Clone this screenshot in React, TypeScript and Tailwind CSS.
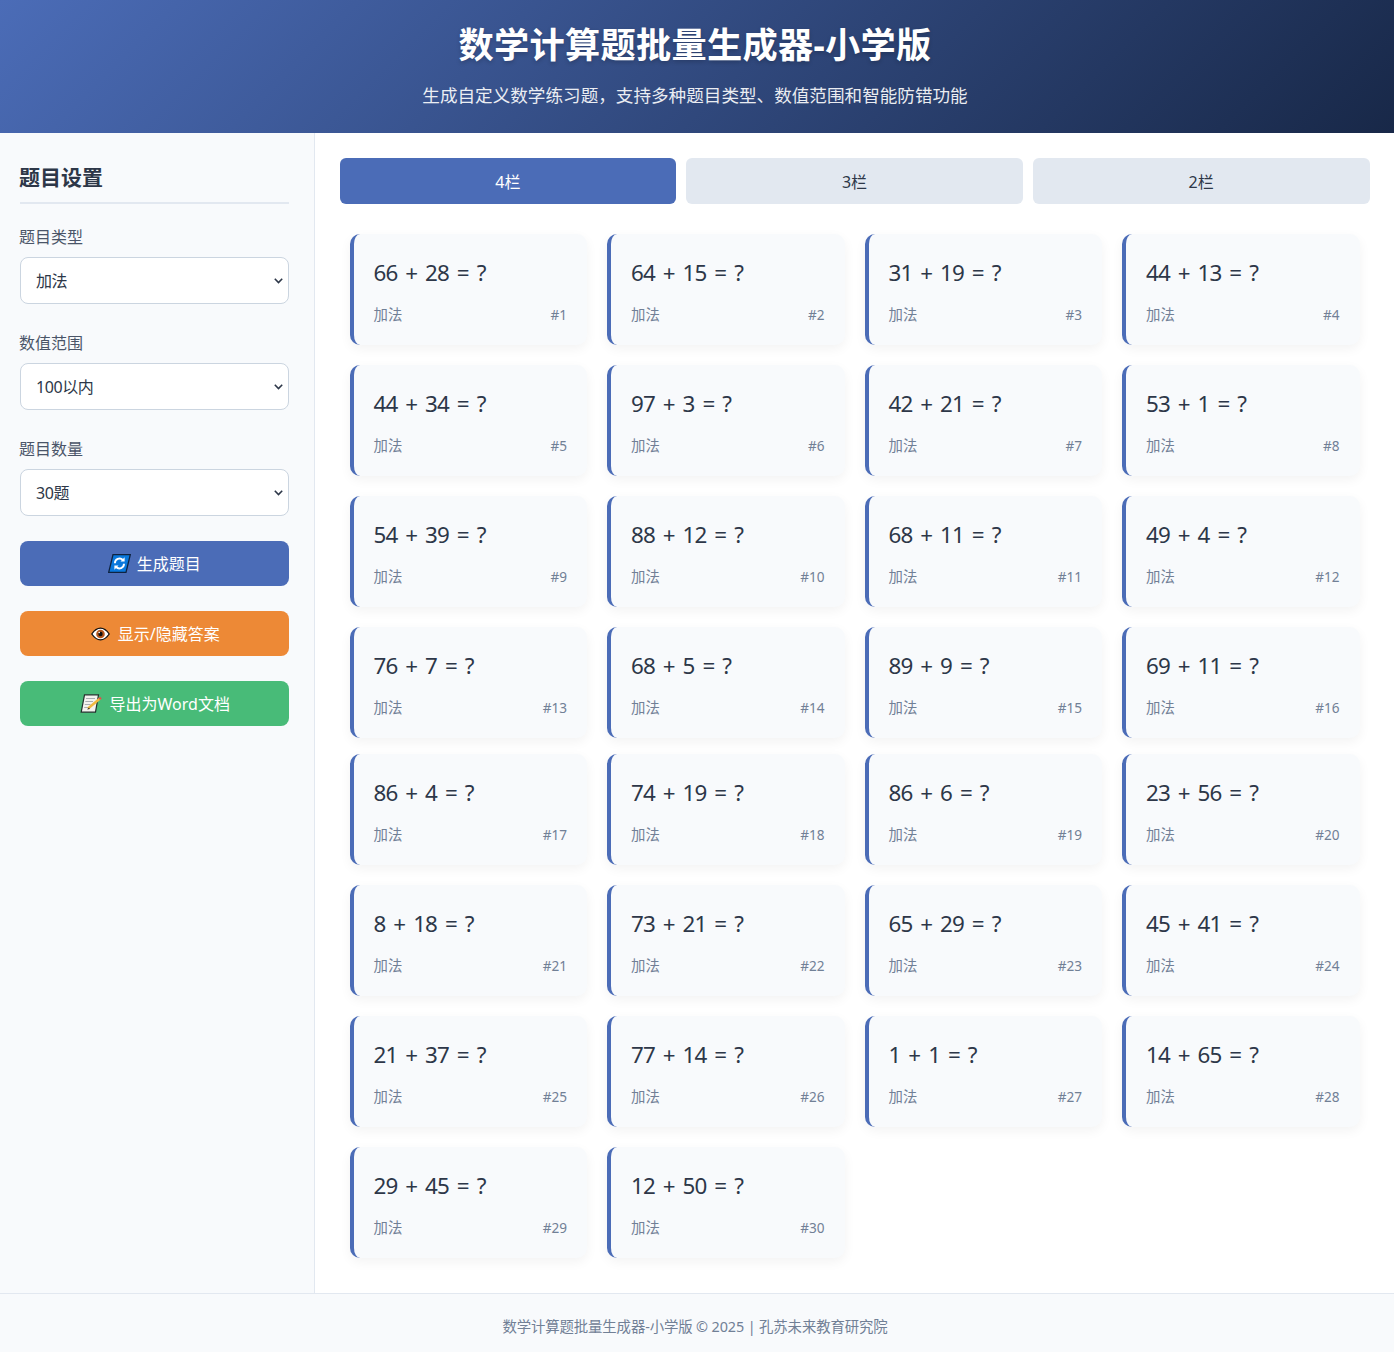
import React from 'react';

const font = 'font-["Noto_Sans","Noto_Sans_CJK_SC",sans-serif]';

const problems = [
  '66 + 28', '64 + 15', '31 + 19', '44 + 13',
  '44 + 34', '97 + 3', '42 + 21', '53 + 1',
  '54 + 39', '88 + 12', '68 + 11', '49 + 4',
  '76 + 7', '68 + 5', '89 + 9', '69 + 11',
  '86 + 4', '74 + 19', '86 + 6', '23 + 56',
  '8 + 18', '73 + 21', '65 + 29', '45 + 41',
  '21 + 37', '77 + 14', '1 + 1', '14 + 65',
  '29 + 45', '12 + 50',
];

function RefreshIcon() {
  return (
    <svg width="23" height="19" viewBox="0 0 23 19" className="shrink-0">
      <path d="M5 0.7H22.3L18 18.3H0.7Z" fill="#0a78dc" stroke="#0f2340" strokeWidth="1.3" />
      <path d="M6.9 9.2a4.6 4.6 0 0 1 7.9-3.2" fill="none" stroke="#fff" strokeWidth="1.9" />
      <path d="M16.6 3.3v4.3h-4.1z" fill="#fff" />
      <path d="M16 9.8a4.6 4.6 0 0 1-7.9 3.2" fill="none" stroke="#fff" strokeWidth="1.9" />
      <path d="M6.4 15.7v-4.3h4.1z" fill="#fff" />
    </svg>
  );
}

function EyeIcon() {
  return (
    <svg width="19" height="14" viewBox="0 0 19 14" className="shrink-0">
      <path d="M0.8 7C3.5 3 6.3 1.2 9.5 1.2S15.5 3 18.2 7C15.5 11 12.7 12.8 9.5 12.8S3.5 11 0.8 7Z" fill="#fff" stroke="#111" strokeWidth="1.3" />
      <circle cx="9.5" cy="7" r="4.3" fill="#b4561c" />
      <circle cx="9.5" cy="7" r="2.2" fill="#111" />
      <circle cx="8.2" cy="5.5" r="0.8" fill="#fff" />
    </svg>
  );
}

function MemoIcon() {
  return (
    <svg width="23" height="19" viewBox="0 0 23 19" className="shrink-0">
      <path d="M4.5 0.8H18.5L15.5 18.2H1.2Z" fill="#f3f3ef" stroke="#22302c" strokeWidth="1.2" />
      <path d="M6 4.5H15M5.3 7.5H13M4.8 10.5H10.5M4.2 13.5H9" stroke="#a9aeb0" strokeWidth="1.1" />
      <path d="M8 14.5L20 4.5" stroke="#f0b93f" strokeWidth="2.4" />
      <path d="M19.2 5.2L21 3.6" stroke="#d9534f" strokeWidth="2.4" />
      <path d="M9 13.5L7 15.6L9.8 15Z" fill="#30302c" />
    </svg>
  );
}

function Field({ label, value }: { label: string; value: string }) {
  return (
    <div className="mb-[25px]">
      <label className="block mb-[6px] text-[16px] leading-[28px] -translate-x-px text-[#4a5568]">{label}</label>
      <div className="relative">
        <select
          defaultValue={value}
          className="block w-full h-[47px] pl-[15px] text-[16px] tracking-[-0.4px] text-[#2d3748] bg-white border border-[#cbd5e0] rounded-lg appearance-none"
        >
          <option>{value}</option>
        </select>
        <svg width="9" height="6" viewBox="0 0 9 6" className="absolute right-[5.5px] top-[21px] pointer-events-none">
          <path d="M0.8 0.8L4.5 4.5L8.2 0.8" fill="none" stroke="#2d3748" strokeWidth="1.6" />
        </svg>
      </div>
    </div>
  );
}

function Card({ text, index }: { text: string; index: number }) {
  return (
    <div className="h-[111px] px-5 pt-5 bg-[#f8fafc] border-l-[4px] border-[#4b6cb7] rounded-[10px] shadow-[0_4px_12px_rgba(0,0,0,0.05)]">
      <div className="text-[22.4px] leading-[37px] text-[#2d3748] tracking-[-0.9px] [word-spacing:3px]">{text} = ?</div>
      <div className="flex justify-between items-center mt-[14px] text-[14.4px] leading-[20px] text-[#718096]">
        <span>加法</span>
        <span className="text-[13.6px]">#{index}</span>
      </div>
    </div>
  );
}

export default function App() {
  return (
    <div className={`${font} h-[1352px] overflow-hidden flex flex-col bg-white`}>
      <header className="h-[133px] pr-1 flex flex-col items-center bg-[linear-gradient(135deg,#4b6cb7,#182848)] text-white">
        <h1 className="mt-[20px] text-[35.2px] leading-[48px] font-bold tracking-[0.3px] [text-shadow:0_2px_4px_rgba(0,0,0,0.2)]">数学计算题批量生成器-小学版</h1>
        <p className="mt-[7px] text-[17.6px] leading-[40px] opacity-90">生成自定义数学练习题，支持多种题目类型、数值范围和智能防错功能</p>
      </header>

      <div className="flex h-[1160px]">
        <aside className="w-[314.5px] shrink-0 pt-[25px] pl-5 pr-[25px] bg-[#f8fafc] border-r border-[#e2e8f0]">
          <h2 className="h-[46px] mb-[19px] pb-[10px] text-[21px] leading-[38px] font-bold -indent-px text-[#2d3748] border-b-2 border-[#e2e8f0]">题目设置</h2>
          <Field label="题目类型" value="加法" />
          <Field label="数值范围" value="100以内" />
          <Field label="题目数量" value="30题" />
          <div className="flex flex-col gap-[25px]">
            <button className="h-[45px] flex items-center justify-center gap-[6px] rounded-lg bg-[#4b6cb7] text-white text-[16px]">
              <RefreshIcon />
              生成题目
            </button>
            <button className="h-[45px] pl-[2px] flex items-center justify-center gap-[8px] rounded-lg bg-[#ed8936] text-white text-[16px]">
              <EyeIcon />
              显示/隐藏答案
            </button>
            <button className="h-[45px] pl-[1px] flex items-center justify-center gap-[7px] rounded-lg bg-[#48bb78] text-white text-[16px]">
              <MemoIcon />
              导出为Word文档
            </button>
          </div>
        </aside>

        <main className="flex-1 pt-[25px] pl-[25px] pr-[24.5px]">
          <div className="flex gap-[10px]">
            <button className="flex-1 h-[46px] rounded-md bg-[#4b6cb7] text-white text-[16px] leading-[48px]">4栏</button>
            <button className="flex-1 h-[46px] rounded-md bg-[#e2e8f0] text-[#2d3748] text-[16px] leading-[48px]">3栏</button>
            <button className="flex-1 h-[46px] rounded-md bg-[#e2e8f0] text-[#2d3748] text-[16px] leading-[48px]">2栏</button>
          </div>
          <div className="mt-[30px] px-[10px] grid grid-cols-4 gap-5">
            {problems.slice(0, 16).map((p, i) => (
              <Card key={i} text={p} index={i + 1} />
            ))}
          </div>
          <div className="mt-4 px-[10px] grid grid-cols-4 gap-5">
            {problems.slice(16).map((p, i) => (
              <Card key={i} text={p} index={i + 17} />
            ))}
          </div>
        </main>
      </div>

      <footer className="h-[59px] pt-[23px] pr-1 text-center bg-[#f8fafc] border-t border-[#e2e8f0] text-[14.4px] tracking-[-0.12px] leading-[20px] text-[#718096]">
        数学计算题批量生成器-小学版 © 2025 | 孔苏未来教育研究院
      </footer>
    </div>
  );
}
